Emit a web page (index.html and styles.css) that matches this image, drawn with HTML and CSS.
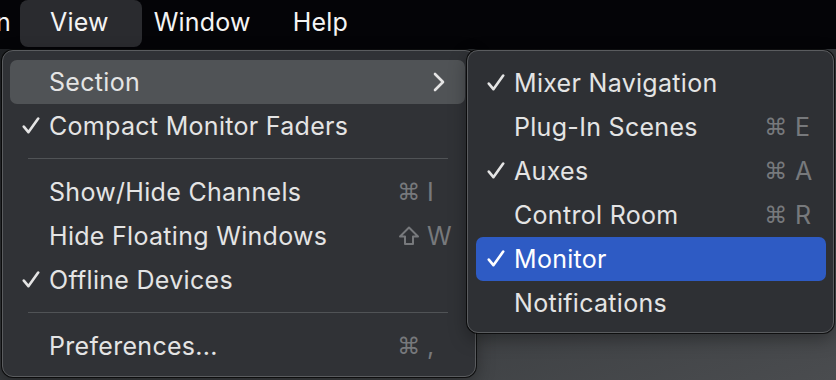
FILE: index.html
```html
<!DOCTYPE html>
<html lang="en">
<head>
  <meta charset="UTF-8">
  <title>View Menu</title>
  <link rel="stylesheet" href="styles.css">
</head>
<body>
  <div class="menubar">
    <span class="title cut">n</span>
    <span class="title open">View</span>
    <span class="title">Window</span>
    <span class="title">Help</span>
  </div>

  <div class="desktop">
    <div class="menu main-menu">
      <div class="item hover">
        <span class="check"></span>
        <span class="label">Section</span>
        <svg class="chevron" width="12" height="20" viewBox="0 0 12 20"><path d="M2 2 L10 10 L2 18" /></svg>
      </div>
      <div class="item">
        <span class="check"><svg width="18" height="17" viewBox="0 0 18 17"><path d="M1.8 9.6 L6.4 15.2 L16.2 1.6" /></svg></span>
        <span class="label">Compact Monitor Faders</span>
      </div>
      <div class="sep"></div>
      <div class="item">
        <span class="check"></span>
        <span class="label">Show/Hide Channels</span>
        <span class="keys"><span class="mod">⌘</span><span class="key">I</span></span>
      </div>
      <div class="item">
        <span class="check"></span>
        <span class="label">Hide Floating Windows</span>
        <span class="keys"><span class="mod"><svg class="shift" width="22" height="20" viewBox="0 0 22 20"><path d="M11 1.5 L20 10.5 L15 10.5 L15 18 L7 18 L7 10.5 L2 10.5 Z" /></svg></span><span class="key">W</span></span>
      </div>
      <div class="item">
        <span class="check"><svg width="18" height="17" viewBox="0 0 18 17"><path d="M1.8 9.6 L6.4 15.2 L16.2 1.6" /></svg></span>
        <span class="label">Offline Devices</span>
      </div>
      <div class="sep"></div>
      <div class="item">
        <span class="check"></span>
        <span class="label">Preferences...</span>
        <span class="keys"><span class="mod">⌘</span><span class="key">,</span></span>
      </div>
    </div>

    <div class="menu submenu">
      <div class="item">
        <span class="check"><svg width="18" height="17" viewBox="0 0 18 17"><path d="M1.8 9.6 L6.4 15.2 L16.2 1.6" /></svg></span>
        <span class="label">Mixer Navigation</span>
      </div>
      <div class="item">
        <span class="check"></span>
        <span class="label">Plug-In Scenes</span>
        <span class="keys"><span class="mod">⌘</span><span class="key">E</span></span>
      </div>
      <div class="item">
        <span class="check"><svg width="18" height="17" viewBox="0 0 18 17"><path d="M1.8 9.6 L6.4 15.2 L16.2 1.6" /></svg></span>
        <span class="label">Auxes</span>
        <span class="keys"><span class="mod">⌘</span><span class="key">A</span></span>
      </div>
      <div class="item">
        <span class="check"></span>
        <span class="label">Control Room</span>
        <span class="keys"><span class="mod">⌘</span><span class="key">R</span></span>
      </div>
      <div class="item selected">
        <span class="check"><svg width="18" height="17" viewBox="0 0 18 17"><path d="M1.8 9.6 L6.4 15.2 L16.2 1.6" /></svg></span>
        <span class="label">Monitor</span>
      </div>
      <div class="item">
        <span class="check"></span>
        <span class="label">Notifications</span>
      </div>
    </div>
  </div>
</body>
</html>
```

FILE: styles.css
```css
body {
  margin: 0;
  width: 836px;
  height: 380px;
  overflow: hidden;
  background: #040407;
  font-family: Inter, "Liberation Sans", sans-serif;
  color: #e4e4e4;
}
.menubar {
  height: 49px;
  display: flex;
  align-items: flex-start;
  background: #040407;
}
.title {
  height: 47px;
  line-height: 44px;
  font-size: 25px;
  letter-spacing: 0.2px;
  color: #f4f4f4;
  padding: 0 21px;
}
.title.cut {
  margin-left: -4px;
  padding: 0;
}
.title.open {
  margin-left: 9px;
  margin-right: -9px;
  padding: 0 33px 0 30px;
  background: #2a2b2f;
  border-radius: 8px;
}
.desktop {
  position: relative;
  height: 331px;
  background: linear-gradient(160deg, #1f2124 0%, #3a3d40 60%, #4a4c4f 100%);
}
.menu {
  position: absolute;
  top: 1px;
  box-sizing: border-box;
  background: #303236;
  border: 1px solid #5a5c5f;
  border-radius: 11px;
  box-shadow: 0 0 0 1px rgba(0, 0, 0, 0.7), 0 6px 18px rgba(0, 0, 0, 0.35);
}
.main-menu {
  left: 2px;
  width: 474px;
  padding: 9px 10px 8px 7px;
}
.submenu {
  left: 467px;
  width: 367px;
  padding: 10px 7px 7px 8px;
  background: #2e3034;
}
.item {
  height: 44px;
  display: flex;
  align-items: center;
  padding: 0 13px 0 12px;
  border-radius: 7px;
  font-size: 25px;
  letter-spacing: 0.3px;
  white-space: nowrap;
}
.submenu .item {
  padding-left: 11px;
}
.item.hover {
  background: #505356;
}
.item.selected {
  background: #2e5bc4;
  color: #ffffff;
}
.check {
  width: 27px;
  height: 44px;
  flex: none;
  display: flex;
  align-items: center;
}
.check svg {
  margin-top: -1px;
}
.check svg path,
.chevron path {
  fill: none;
  stroke: currentColor;
  stroke-width: 2.6;
  stroke-linecap: round;
  stroke-linejoin: round;
}
.label {
  flex: 1;
}
.chevron {
  margin-right: 7px;
  color: #e4e4e4;
}
.keys {
  display: flex;
  align-items: center;
  color: #77797c;
}
.mod {
  width: 22px;
  display: flex;
  justify-content: center;
  font-family: "DejaVu Sans", sans-serif;
  font-size: 23px;
}
.shift path {
  fill: none;
  stroke: #77797c;
  stroke-width: 2;
  stroke-linejoin: round;
}
.key {
  width: 25px;
  margin-left: 7px;
}
.submenu .key {
  width: 18px;
  margin-left: 8px;
}
.sep {
  height: 1px;
  margin: 10px 17px 11px 18px;
  background: #505356;
}
```
